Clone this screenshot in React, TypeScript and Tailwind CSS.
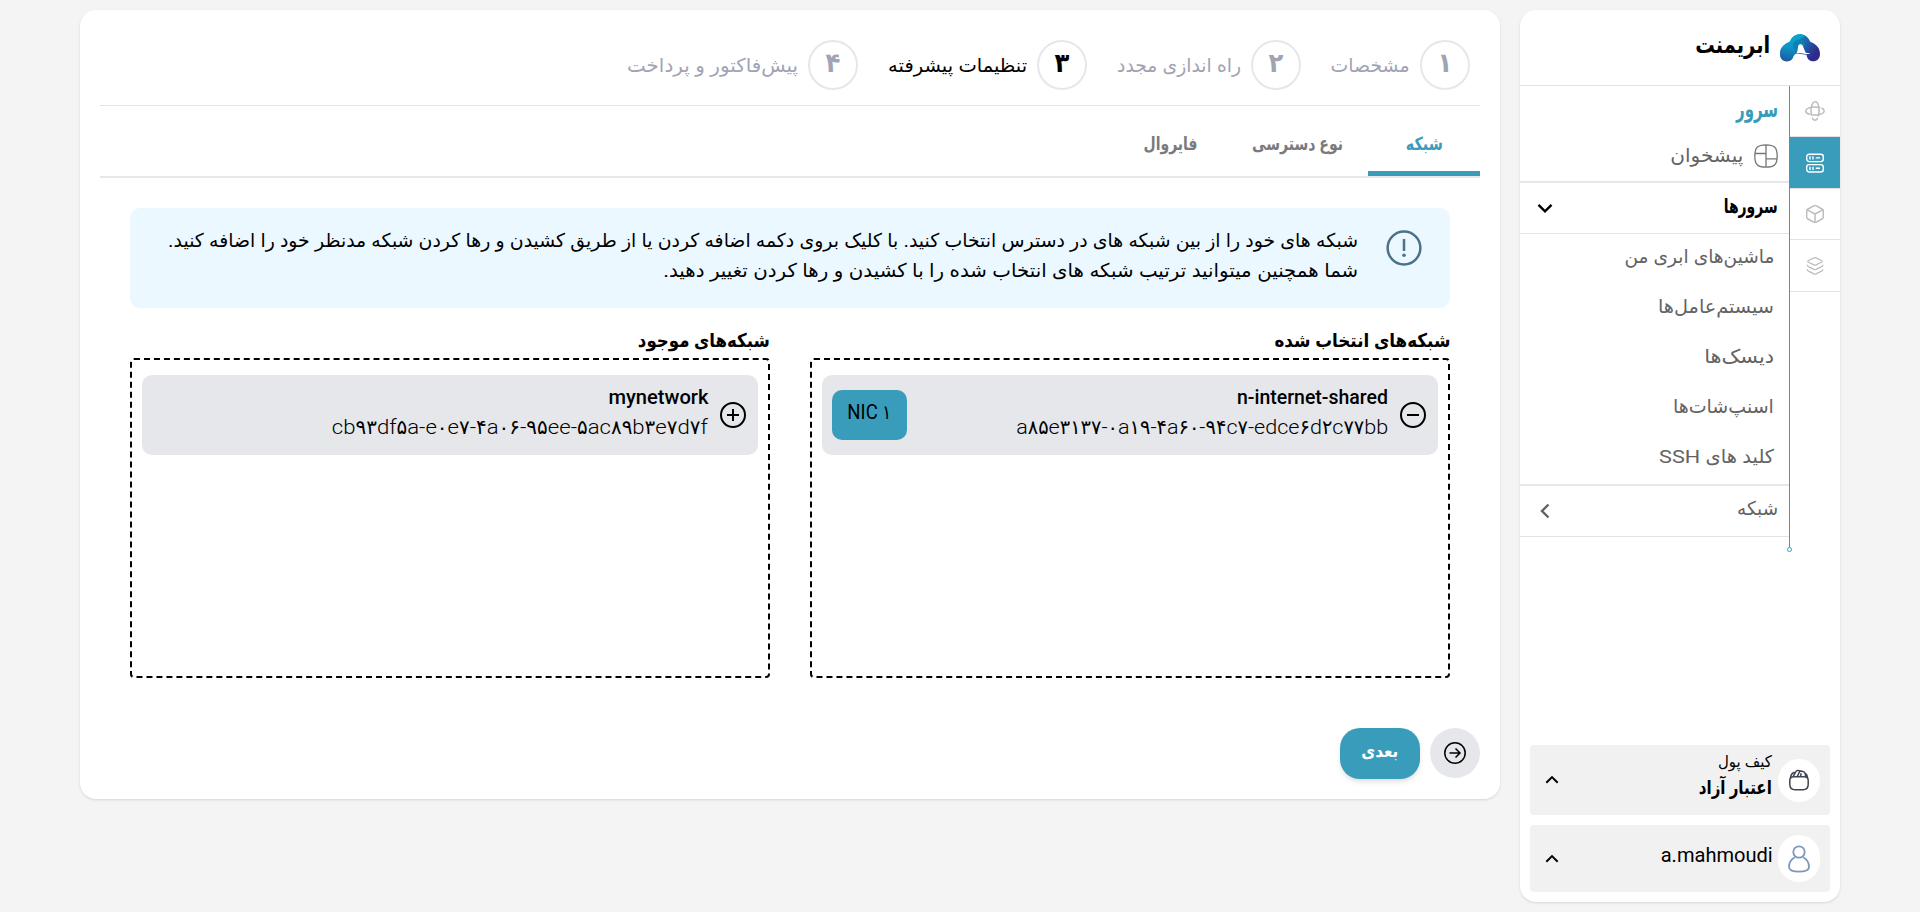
import React, { useLayoutEffect, useRef, useState } from "react";

/** One line of text, condensed or widened to fill the width given by its class. */
function Line({ className = "", dir = "rtl", children }: { className?: string; dir?: "rtl" | "ltr"; children: React.ReactNode }) {
  const box = useRef<HTMLSpanElement>(null);
  const inner = useRef<HTMLSpanElement>(null);
  const [scale, setScale] = useState(1);
  useLayoutEffect(() => {
    if (box.current && inner.current) setScale(box.current.offsetWidth / inner.current.getBoundingClientRect().width);
  }, []);
  return (
    <span ref={box} dir="rtl" className={`block shrink-0 whitespace-nowrap ${className}`}>
      <span ref={inner} dir={dir} className="inline-block origin-right" style={{ transform: `scaleX(${scale})` }}>
        {children}
      </span>
    </span>
  );
}

function Logo() {
  return (
    <svg width="40" height="28" viewBox="0 0 40 28" className="mt-6">
      <defs>
        <linearGradient id="arch" gradientUnits="userSpaceOnUse" x1="10" y1="3" x2="36" y2="24">
          <stop offset="0" stopColor="#0a9fc9" />
          <stop offset="0.45" stopColor="#1a68ad" />
          <stop offset="0.9" stopColor="#312a8a" />
        </linearGradient>
        <linearGradient id="leg" gradientUnits="userSpaceOnUse" x1="14" y1="3" x2="6" y2="27">
          <stop offset="0" stopColor="#04a8cc" />
          <stop offset="0.45" stopColor="#0b97c4" />
          <stop offset="1" stopColor="#2353a4" />
        </linearGradient>
      </defs>
      <path d="M20 .3c4.500 0 8 2.700 9.600 6.300.4 1 .8 1.300 1.700 1.700C36.500 10.300 40 14.500 40 20c0 4.500-2.800 7.300-6.800 7.300-4 0-6.200-2.700-6.700-6.500L17 19.500c-2 0-3 1-3.600 2.700C12.500 25.500 10.300 27.300 7 27.300c-4.200 0-7-2.900-7-7.300C0 14.500 3.500 10.300 8.700 8.300c.9-.4 1.300-.7 1.700-1.700C12 3 15.500.3 20 .3z" fill="url(#arch)" />
      <path d="M20 .3C15.500.3 12 3 10.400 6.600c-.4 1-.8 1.300-1.700 1.700C3.500 10.300 0 14.500 0 20c0 4.400 2.800 7.300 7 7.300 3.300 0 5.500-1.800 6.400-5.100L16.500 19 13 13c-.5-3 1-6.500 6-7.500L25 2C23.500.9 21.900.3 20 .3z" fill="url(#leg)" opacity=".85" />
      <path d="M13.300 14c-.6-5 2.200-8 6.200-8 3 0 5 1.500 5.700 4.200l-1.400 3.300-1.400-2.300c-1-1.300-3-1.200-3.700.3l-2.400 6.700z" fill="#0f7fb2" />
      <path d="M18.200 12.200c.6-2.400 3.600-2.600 4.500-.4l3 6.900 4.900.7c-2.600.9-4.600.9-6.600.3-2.200-.7-4.400-.9-7.400-.5 1-2.200 1.200-4.500 1.600-7z" fill="#fff" />
    </svg>
  );
}

const Orbit = () => (
  <svg width="20" height="20" viewBox="0 0 20 20" fill="none" stroke="currentColor" strokeWidth="1.5" strokeLinecap="round">
    <path d="M4.500 13.300C2 12.700.8 11.500.8 10c0-2.300 4-4 9.200-4 1.800 0 3.400.2 4.800.6M17 7.300c1.500.7 2.200 1.700 2.200 2.700 0 2.300-4 4.100-9.200 4.100-1.200 0-1.800 0-2.500-.1" />
    <path d="M6.500 14C6.200 12.800 6 11.500 6 10 6 4.500 7.700.8 10 .8s4 3.700 4 9.200c0 2-.2 3.500-.7 5M12.400 17.500c-.7 1.200-1.500 1.700-2.400 1.700-1 0-1.900-.6-2.500-1.800" />
  </svg>
);

const Servers = () => (
  <svg width="18" height="20" viewBox="0 0 18 20" fill="none" stroke="currentColor" strokeWidth="1.4">
    <rect x=".7" y="1.200" width="16.600" height="7.400" rx="2.500" />
    <rect x=".7" y="11.600" width="16.600" height="7.400" rx="2.500" />
    <path d="M4 3.300v3.200M7 3.300v3.200M9.800 4.900H14M4 13.700v3.200M7 13.700v3.200M9.800 15.300H14" />
  </svg>
);

const Cube = () => (
  <svg width="18" height="18" viewBox="0 0 18 18" fill="none" stroke="currentColor" strokeWidth="1.500" strokeLinejoin="round" strokeLinecap="round">
    <path d="M7.700.9 2 4C1.100 4.500.7 5.100.7 6v6c0 .9.400 1.500 1.300 2l5.700 3.100c.8.400 1.800.4 2.600 0L16 14c.9-.5 1.300-1.100 1.300-2V6c0-.9-.4-1.500-1.300-2L10.300.9c-.8-.4-1.800-.4-2.600 0z" />
    <path d="M1.200 4.800 9 9l7.800-4.200M9 9v8.200" />
  </svg>
);

const Layers = () => (
  <svg width="18" height="18" viewBox="0 0 18 18" fill="none" stroke="currentColor" strokeWidth="1.200" strokeLinejoin="round" strokeLinecap="round">
    <path d="M8 .9 2.500 3.500c-1 .5-1 1.300 0 1.800L8 7.900c.7.300 1.300.3 2 0l5.500-2.600c1-.5 1-1.300 0-1.800L10 .9c-.7-.3-1.300-.3-2 0z" />
    <path d="M1.200 8c0 .7.500 1.200 1.200 1.600L8 12.400c.7.300 1.300.3 2 0l5.600-2.800c.7-.4 1.200-.9 1.200-1.600M1.200 12.500c0 .7.500 1.200 1.200 1.600L8 16.900c.7.300 1.300.3 2 0l5.600-2.800c.7-.4 1.200-.9 1.200-1.600" />
  </svg>
);

const Dashboard = () => (
  <svg width="24" height="24" viewBox="0 0 24 24" fill="none" stroke="#777" strokeWidth="1.300">
    <path d="M12 .8c8.500 0 11.200 2.700 11.200 11.200S20.500 23.200 12 23.200.8 20.500.8 12 3.500.8 12 .8zM12 1v22M1 9.500h11M12 14.800h11" />
  </svg>
);

const Wallet = () => (
  <svg width="20" height="22" viewBox="0 0 20 22" fill="none" stroke="#3f4454" strokeWidth="1.500" strokeLinejoin="round">
    <path d="M.8 11.500c0-2.700 1.200-3.700 4-3.700h10.400c2.800 0 4 1 4 3.700v3.700c0 4-1.500 5.500-5.200 5.500H6c-3.700 0-5.200-1.500-5.200-5.500z" />
    <path d="M1.500 9.300C1.500 6.500 2.800 4.200 5.500 3.200M18.500 9.300c0-2.400-1-4.300-3-5M4 7.800l2.700-5c.5-1 1.200-1.400 2.300-1.200l5 .9c1.300.3 2 1 2.200 2.200l.5 3.100M8 7.800l3-5.800M11.300 7.800l1-3.600" />
  </svg>
);

const Person = () => (
  <svg width="22" height="28" viewBox="0 0 22 28" fill="none" stroke="#7f97bf" strokeWidth="1.800">
    <circle cx="11" cy="7" r="5.700" />
    <path d="M6.800 12.300C3.300 14.300 1 18 1 22c0 3.200 3.500 4.600 10 4.600S21 25.200 21 22c0-4-2.300-7.700-5.800-9.700" />
  </svg>
);

function Chevron({ d, size, width = 2 }: { d: string; size: number; width?: number }) {
  return (
    <svg width={size} height={size} viewBox="0 0 16 16" fill="none" stroke="currentColor" strokeWidth={width}>
      <path d={d} />
    </svg>
  );
}
const DOWN = "M1.500 4.800 8 11.300l6.500-6.500";
const UP = "M1.500 11.200 8 4.700l6.500 6.500";
const LEFT = "M11.500 1.500 5 8l6.500 6.500";

const menu = [
  { text: "ماشین‌های ابری من", w: "w-[150px]" },
  { text: "سیستم‌عامل‌ها", w: "w-[116px]" },
  { text: "دیسک‌ها", w: "w-[70px]" },
  { text: "اسنپ‌شات‌ها", w: "w-[101px]" },
  { text: "کلید های SSH", w: "w-[115px]" },
];

const steps = [
  { n: "۱", text: "مشخصات", w: "w-[79px]" },
  { n: "۲", text: "راه اندازی مجدد", w: "w-[124px]" },
  { n: "۳", text: "تنظیمات پیشرفته", w: "w-[139px]", active: true },
  { n: "۴", text: "پیش‌فاکتور و پرداخت", w: "w-[171px]" },
];

function Sidebar() {
  return (
    <aside className="flex h-[892px] w-[320px] shrink-0 flex-col rounded-2xl bg-white shadow">
      <header className="flex h-[76px] shrink-0 items-start gap-[10px] border-b border-[#e3e3e6] pr-5">
        <Logo />
        <Line className="mt-[19px] w-[75px] text-[24px] leading-[32px] font-bold">ابریمنت</Line>
      </header>
      <div className="flex">
        <nav className="w-[50px] shrink-0 text-[#bdbdbd]">
          <div className="flex h-[51px] items-center justify-center border-b border-[#e3e3e6]"><Orbit /></div>
          <div className="flex h-[51px] items-center justify-center bg-[#389cba] text-white"><Servers /></div>
          <div className="flex h-[52px] items-center justify-center border-y border-[#e3e3e6]"><Cube /></div>
          <div className="flex h-[52px] items-center justify-center border-b border-[#e3e3e6]"><Layers /></div>
        </nav>
        <div className="relative h-[461px] w-[270px] border-r border-[#389cba] text-[#636363]">
          <span className="absolute -right-[3px] bottom-[-5px] size-[5px] rounded-full border border-[#389cba] bg-white" />
          <div className="flex h-[97px] flex-col border-b-2 border-[#e5e7eb] pr-[11px]">
            <Line className="mt-[5px] w-[42px] text-[23px] leading-[38px] font-bold text-[#389cba]">سرور</Line>
            <div className="mt-[15px] flex items-center gap-[11px]">
              <Dashboard />
              <Line className="-my-2 w-[73px] text-[19px] leading-[28px]">پیشخوان</Line>
            </div>
          </div>
          <div className="flex h-[51px] items-center justify-between border-b border-[#e3e3e6] pr-[11px] pl-[17px] text-black">
            <Line className="-mt-1 w-[54px] text-[20px] leading-[42px] font-bold">سرورها</Line>
            <Chevron d={DOWN} size={16} width={2.4} />
          </div>
          <ul className="flex h-[252px] flex-col border-b-2 border-[#e5e7eb] pr-[15px]">
            {menu.map((m) => (
              <li key={m.text} className="h-[50px]">
                <Line className={`text-[19px] leading-[46px] ${m.w}`}>{m.text}</Line>
              </li>
            ))}
          </ul>
          <div className="flex h-[51px] items-center justify-between border-b border-[#e3e3e6] pr-[11px] pl-[17px]">
            <Line className="-mt-1 w-[41px] text-[19px] leading-[42px]">شبکه</Line>
            <Chevron d={LEFT} size={16} width={2.400} />
          </div>
        </div>
      </div>
      <div className="mt-auto flex flex-col gap-[10px] p-[10px]">
        <div className="flex h-[70px] items-center rounded bg-[#f1f1f1] pr-[10px] pl-[15px]">
          <span className="flex h-[43px] w-[42px] items-center justify-center rounded-full bg-white"><Wallet /></span>
          <div className="mr-[6px] -mt-[9px] flex flex-col">
            <Line className="w-[54px] text-[16px] leading-[24px] font-medium">کیف پول</Line>
            <Line className="w-[73px] text-[19px] leading-[27px] font-bold">اعتبار آزاد</Line>
          </div>
          <span className="mr-auto"><Chevron d={UP} size={14} width={2.300} /></span>
        </div>
        <div className="flex h-[67px] items-center rounded bg-[#f1f1f1] pr-[10px] pl-[15px]">
          <span className="flex h-[47px] w-[42px] items-center justify-center rounded-full bg-white"><Person /></span>
          <Line dir="ltr" className="mr-[5px] -mt-[7px] w-[112px] text-[20px] leading-[28px]">a.mahmoudi</Line>
          <span className="mr-auto"><Chevron d={UP} size={14} width={2.300} /></span>
        </div>
      </div>
    </aside>
  );
}

function NetworkBox({ title, titleW, name, nameW, id, idW, sign, badge }: {
  title: string; titleW: string; name: string; nameW: string; id: string; idW: string; sign: string; badge?: string;
}) {
  return (
    <section className="w-[640px]">
      <Line className={`pt-[3px] text-[19px] leading-[30px] font-bold ${titleW}`}>{title}</Line>
      <div className="mt-[2px] h-[320px] rounded border-2 border-dashed border-black px-[10px] pt-[15px]">
        <div className="flex h-[80px] items-center rounded-[10px] bg-[#e5e7eb] pr-3 pl-[10px]">
          <svg width="26" height="26" viewBox="0 0 26 26" fill="none" stroke="#000" strokeWidth="2">
            <circle cx="13" cy="13" r="12" />
            <path d={sign} />
          </svg>
          <div className="mr-3 -mt-[6px] flex flex-col text-black">
            <Line dir="ltr" className={`text-[20px] leading-[30px] font-medium ${nameW}`}>{name}</Line>
            <Line dir="ltr" className={`text-[20px] leading-[30px] font-light ${idW}`}>{id}</Line>
          </div>
          {badge && (
            <div className="mr-auto flex h-[50px] w-[75px] items-center justify-center rounded-[10px] bg-[#389cba] pb-[6px]">
              <Line dir="ltr" className="w-[44px] text-[20px] leading-[28px] text-black">{badge}</Line>
            </div>
          )}
        </div>
      </div>
    </section>
  );
}

export default function App() {
  return (
    <div dir="rtl" className="flex h-[912px] w-[1920px] gap-5 overflow-hidden bg-[#f4f4f4] pt-[10px] pr-20 font-[Roboto,'DejaVu_Sans_Condensed','DejaVu_Sans',sans-serif] text-black">
      <Sidebar />
      <main className="h-[789px] w-[1420px] shrink-0 rounded-2xl bg-white px-5 shadow">
        <ol className="flex h-[96px] items-start gap-[30px] border-b border-[#e3e3e6] pt-[30px] pr-[10px]">
          {steps.map((s) => (
            <li key={s.n} className={s.active ? "flex gap-[10px] text-black" : "flex gap-[10px] text-[#a0a3b3]"}>
              <span className="flex size-[50px] justify-center rounded-full border-2 border-[#e5e7eb] text-[27px] leading-[43px] font-bold">{s.n}</span>
              <Line className={`text-[19px] leading-[52px] ${s.w}`}>{s.text}</Line>
            </li>
          ))}
        </ol>
        <div className="flex h-[72px] border-b-2 border-[#e5e7eb] font-bold text-[#7a7a7a]">
          <div className="flex w-[112px] justify-center border-b-5 border-[#389cba] text-[#389cba]">
            <Line className="w-[37px] text-[18px] leading-[75px]">شبکه</Line>
          </div>
          <div className="flex w-[142px] justify-center"><Line className="w-[91px] text-[18px] leading-[75px]">نوع دسترسی</Line></div>
          <div className="flex w-[111px] justify-center"><Line className="w-[54px] text-[18px] leading-[75px]">فایروال</Line></div>
        </div>
        <div className="px-[30px] pt-[30px]">
          <div className="flex h-[100px] gap-[28px] rounded-[10px] bg-[#ecf8ff] pr-7">
            <svg width="36" height="36" viewBox="0 0 36 36" fill="none" stroke="#4b7288" strokeWidth="2.500" className="mt-[22px]">
              <circle cx="18" cy="18" r="16.400" />
              <path d="M18 9v12" />
              <circle cx="18" cy="25.200" r="1.800" fill="#4b7288" stroke="none" />
            </svg>
            <div className="pt-[18px]">
              <Line className="w-[1190px] text-[19px] leading-[30px]">شبکه های خود را از بین شبکه های در دسترس انتخاب کنید. با کلیک بروی دکمه اضافه کردن یا از طریق کشیدن و رها کردن شبکه مدنظر خود را اضافه کنید.</Line>
              <Line className="w-[695px] text-[19px] leading-[30px]">شما همچنین میتوانید ترتیب شبکه های انتخاب شده را با کشیدن و رها کردن تغییر دهید.</Line>
            </div>
          </div>
          <div className="mt-[15px] flex justify-between">
            <NetworkBox title="شبکه‌های انتخاب شده" titleW="w-[176px]" name="n-internet-shared" nameW="w-[151px]" id="a۸۵e۳۱۳۷-۰a۱۹-۴a۶۰-۹۴c۷-edce۶d۲c۷۷bb" idW="w-[372px]" sign="M7 13h12" badge="NIC ۱" />
            <NetworkBox title="شبکه‌های موجود" titleW="w-[132px]" name="mynetwork" nameW="w-[100px]" id="cb۹۳df۵a-e۰e۷-۴a۰۶-۹۵ee-۵ac۸۹b۳e۷d۷f" idW="w-[376px]" sign="M7 13h12M13 7v12" />
          </div>
        </div>
        <div className="mt-[50px] flex gap-[10px]">
          <button className="flex size-[50px] items-center justify-center rounded-full bg-[#e5e7eb]">
            <svg width="22" height="22" viewBox="0 0 22 22" fill="none" stroke="#000" strokeWidth="1.500">
              <circle cx="11" cy="11" r="10.200" />
              <path d="M5.500 11h10M11.500 6.500 16 11l-4.500 4.500" />
            </svg>
          </button>
          <button className="flex h-[51px] w-[80px] justify-center rounded-[20px] bg-[#389cba] text-white shadow-md">
            <Line className="w-[37px] text-[17px] leading-[46px] font-bold">بعدی</Line>
          </button>
        </div>
      </main>
    </div>
  );
}
